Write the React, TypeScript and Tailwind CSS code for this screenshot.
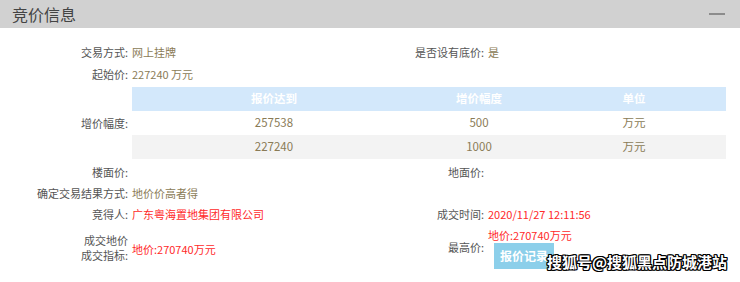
const font = {
    fontFamily: '"Noto Sans CJK SC", "Noto Sans", sans-serif',
};

const bids = [
    { price: "257538", step: "500", unit: "万元" },
    { price: "227240", step: "1000", unit: "万元" },
];

const Label = ({ children }: { children: React.ReactNode }) => (
    <div className="pr-[4px] text-right text-[#555555]">{children}</div>
);

const App = () => {
    return (
        <div
            className="relative h-[282px] w-[740px] overflow-hidden bg-white text-[11px]"
            style={font}
        >
            {/* title bar */}
            <div className="flex h-[28px] items-center justify-between bg-[#d1d1d1] pl-[12px] pr-[15px]">
                <span className="text-[16px] text-[#444444]">竞价信息</span>
                <span className="h-[2px] w-[16px] bg-[#8c8c8c]" />
            </div>

            <div className="grid grid-cols-[132px_268px_88px_1fr] pt-[13px] leading-[22px]">
                <Label>交易方式:</Label>
                <div className="text-[#8a7b56]">网上挂牌</div>
                <Label>是否设有底价:</Label>
                <div className="text-[#8a7b56]">是</div>

                <Label>起始价:</Label>
                <div className="col-span-3 text-[#8a7b56]">227240 万元</div>

                <div className="flex items-center justify-end pr-[4px] text-[#555555]">
                    增价幅度:
                </div>
                <div className="col-span-3 py-[2px]">
                    <table className="w-[594px] border-collapse text-center text-[11.5px] leading-none">
                        <thead>
                            <tr className="h-[24px] bg-[#d3e8fb] font-bold text-white">
                                <th className="w-[284px]">报价达到</th>
                                <th className="w-[126px]">增价幅度</th>
                                <th>单位</th>
                            </tr>
                        </thead>
                        <tbody className="text-[#8a7b56]">
                            {bids.map((b, i) => (
                                <tr
                                    key={b.price}
                                    className={`h-[24px] ${i % 2 === 1 ? "bg-[#f3f3f3]" : "bg-white"}`}
                                >
                                    <td>{b.price}</td>
                                    <td>{b.step}</td>
                                    <td>{b.unit}</td>
                                </tr>
                            ))}
                        </tbody>
                    </table>
                </div>

                <Label>楼面价:</Label>
                <div />
                <Label>地面价:</Label>
                <div />

                <div className="pr-[4px] text-right leading-[21px] text-[#555555]">
                    确定交易结果方式:
                </div>
                <div className="col-span-3 leading-[21px] text-[#8a7b56]">地价价高者得</div>

                <div className="pr-[4px] text-right leading-[21px] text-[#555555]">竞得人:</div>
                <div className="leading-[21px] text-[#ff2a2a]">广东粤海置地集团有限公司</div>
                <div className="pr-[4px] text-right leading-[21px] text-[#555555]">
                    成交时间:
                </div>
                <div className="leading-[21px] text-[#ff2a2a]">2020/11/27 12:11:56</div>

                <div className="flex items-center justify-end pr-[4px] pt-[1px] text-right leading-[15px] text-[#555555]">
                    成交地价
                    <br />
                    成交指标:
                </div>
                <div className="flex items-center pt-[3px] text-[#ff2a2a]">地价:270740万元</div>
                <div className="flex items-center justify-end pr-[4px] text-[#555555]">
                    最高价:
                </div>
                <div className="flex flex-col items-start pt-[3px]">
                    <span className="leading-[15px] text-[#ff2a2a]">地价:270740万元</span>
                    <button className="ml-[6px] h-[26px] w-[60px] bg-[#8ccfea] text-[12px] font-bold leading-none text-white">
                        报价记录
                    </button>
                </div>
            </div>

            {/* watermark */}
            <div className="absolute left-[547px] top-[252px] text-[15px] font-bold leading-[20px] text-white [text-shadow:1px_1px_0_#000,-1px_-1px_0_#000,1px_-1px_0_#000,-1px_1px_0_#000,1px_0_0_#000,-1px_0_0_#000,0_1px_0_#000,0_-1px_0_#000]">
                搜狐号@搜狐黑点防城港站
            </div>
        </div>
    );
};

export default App;
